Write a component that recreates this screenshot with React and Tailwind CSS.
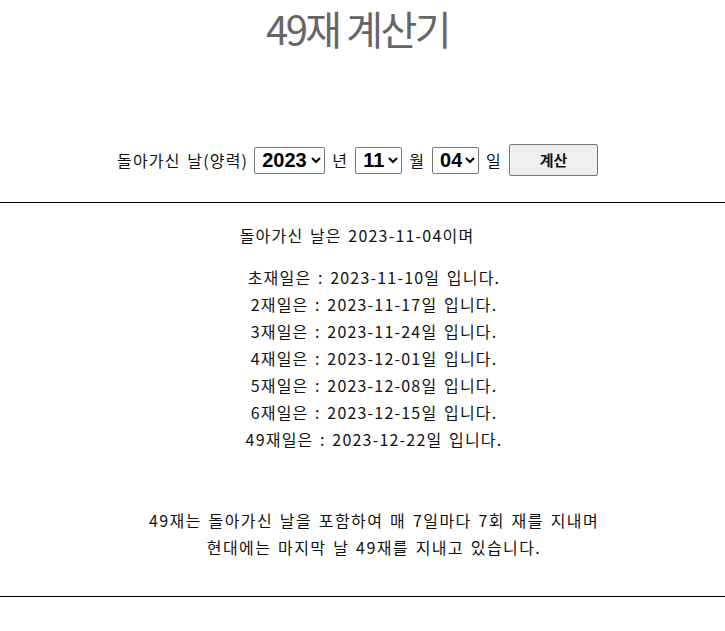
import React, { useState } from "react";

const pad = (n) => String(n).padStart(2, "0");

const addDays = (y, m, d, days) => {
  const t = new Date(Date.UTC(y, m - 1, d + days));
  return `${t.getUTCFullYear()}-${pad(t.getUTCMonth() + 1)}-${pad(t.getUTCDate())}`;
};

const LABELS = ["초재", "2재", "3재", "4재", "5재", "6재", "49재"];

const years = Array.from({ length: 11 }, (_, i) => 2018 + i);
const months = Array.from({ length: 12 }, (_, i) => i + 1);
const days = Array.from({ length: 31 }, (_, i) => i + 1);

export default function App() {
  const [year, setYear] = useState(2023);
  const [month, setMonth] = useState(11);
  const [day, setDay] = useState(4);

  const selectClass =
    "h-[27px] border border-[#767676] bg-white pl-[3px] text-[20px] font-bold text-black rounded-[2px] tracking-normal font-['Liberation_Sans',Arial,sans-serif]";

  return (
    <div className="min-h-screen bg-white text-[#111] font-['Noto_Sans_CJK_KR','Malgun_Gothic',sans-serif] tracking-[1.2px] [word-spacing:1.8px]">
      <h1 className="pr-[10px] text-center text-[40px] leading-[56px] tracking-[-2.5px] [word-spacing:0] text-[#666]">
        49재 계산기
      </h1>

      <div className="mt-[88px] pr-[10px] flex items-center justify-center gap-[7px] text-[16px]">
        <span className="mr-[-1px]">돌아가신 날(양력)</span>
        <select
          className={`${selectClass} w-[71px]`}
          value={year}
          onChange={(e) => setYear(Number(e.target.value))}
        >
          {years.map((y) => (
            <option key={y} value={y}>
              {y}
            </option>
          ))}
        </select>
        <span>년</span>
        <select
          className={`${selectClass} w-[47px]`}
          value={month}
          onChange={(e) => setMonth(Number(e.target.value))}
        >
          {months.map((m) => (
            <option key={m} value={m}>
              {pad(m)}
            </option>
          ))}
        </select>
        <span>월</span>
        <select
          className={`${selectClass} w-[47px]`}
          value={day}
          onChange={(e) => setDay(Number(e.target.value))}
        >
          {days.map((d) => (
            <option key={d} value={d}>
              {pad(d)}
            </option>
          ))}
        </select>
        <span>일</span>
        <button className="h-[32px] w-[89px] border border-[#767676] bg-[#efefef] text-[15px] font-bold rounded-[2px] tracking-normal">
          계산
        </button>
      </div>

      <hr className="mt-[26px] border-t border-black" />

      <div className="pt-[19px] text-center text-[16px]">
        <p className="pr-[11px] leading-[27px]">
          돌아가신 날은 {year}-{pad(month)}-{pad(day)}이며
        </p>
        <ul className="mt-[15px] pl-[23px] leading-[27px]">
          {LABELS.map((label, i) => (
            <li key={label}>
              {label}일은 : {addDays(year, month, day, 6 + i * 7)}일 입니다.
            </li>
          ))}
        </ul>
        <p className="mt-[54px] pl-[23px] leading-[27px] tracking-[1.4px]">
          49재는 돌아가신 날을 포함하여 매 7일마다 7회 재를 지내며
          <br />
          현대에는 마지막 날 49재를 지내고 있습니다.
        </p>
      </div>

      <hr className="mt-[35px] border-t border-black" />
    </div>
  );
}
